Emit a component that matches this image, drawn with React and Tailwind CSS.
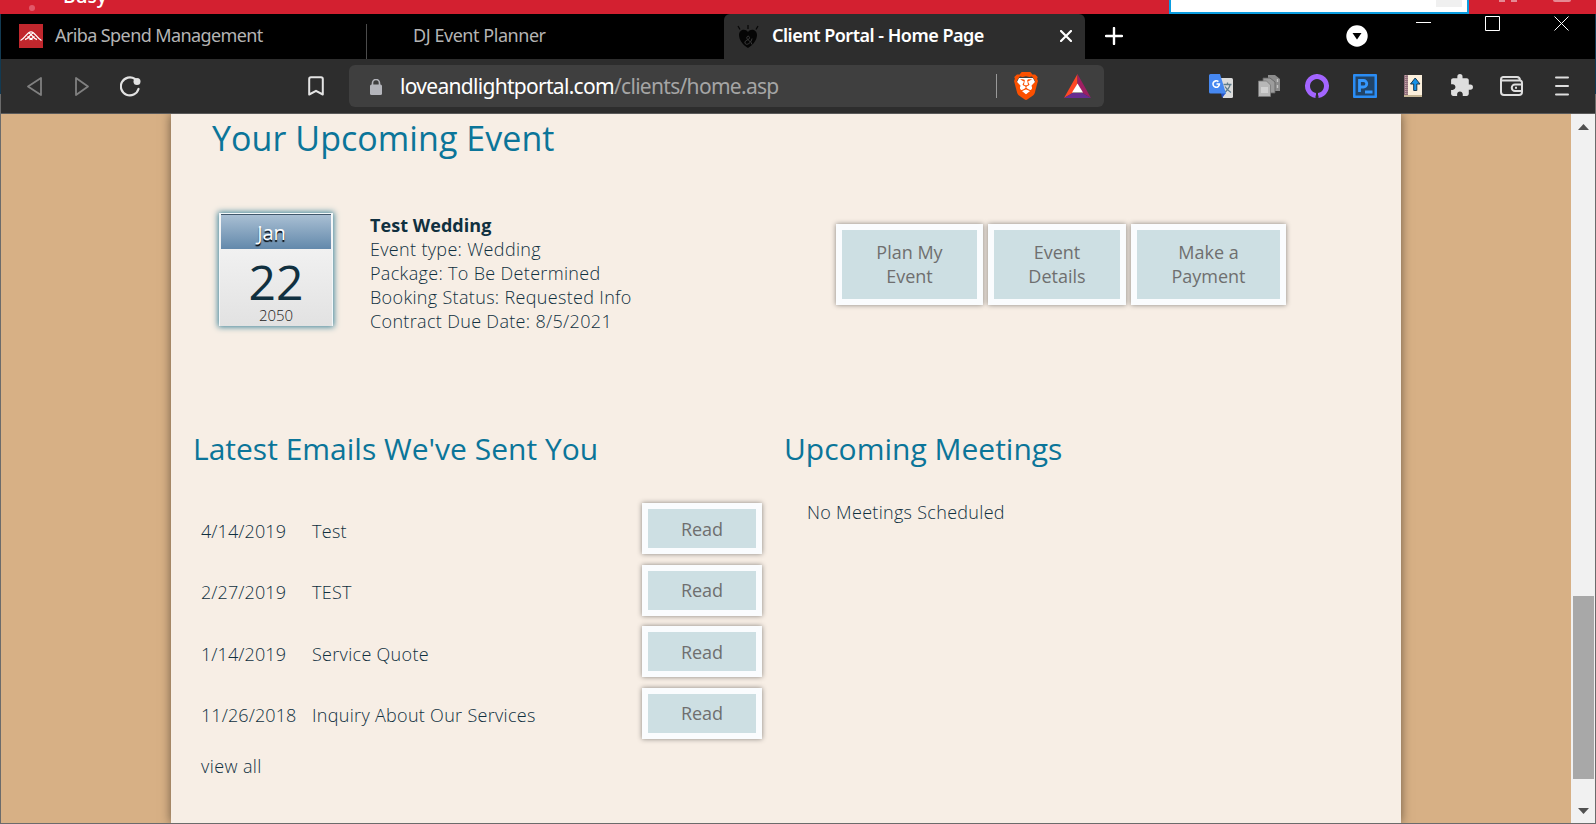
import { SiBrave } from "react-icons/si";
import { MdExtension } from "react-icons/md";

const emails = [
  { date: "4/14/2019", subject: "Test", gap: "mt-0", text: "pt-[5px]", label: "pb-0" },
  { date: "2/27/2019", subject: "TEST", gap: "mt-[11px]", text: "pt-[3px]", label: "pb-[2px]" },
  { date: "1/14/2019", subject: "Service Quote", gap: "mt-[10px]", text: "pt-[5px]", label: "pb-0" },
  { date: "11/26/2018", subject: "Inquiry About Our Services", gap: "mt-[11px]", text: "pt-[3px]", label: "pb-[2px]" },
];

const frame =
  "box-border flex shrink-0 items-center justify-center border-[6px] border-[#fafcfe] bg-[#cddfe3] text-center text-[18px] leading-[24px] text-[#6f6f6f] shadow-[0_0_5px_rgba(0,0,0,0.45)]";

function TopStrip() {
  return (
    <div className="flex h-[14px] shrink-0 overflow-hidden bg-[#d32030]">
      <div className="ml-[29px] mt-[5px] h-[6px] w-[6px] rounded-full bg-[#e2596a]" />
      <span className="-mt-[16px] ml-[28px] h-[24px] w-[60px] text-[19px] font-semibold leading-[24px] text-white">
        Busy
      </span>
      <div className="ml-[1046px] flex h-[14px] w-[300px] justify-end border-x-2 border-b-2 border-[#0a9de0] bg-white pr-[5px]">
        <div className="h-[7px] w-[26px] bg-[#f0f0f0]" />
      </div>
      <div className="ml-[30px] h-[2px] w-[6px] bg-[#e58a94]" />
      <div className="ml-[6px] h-[2px] w-[6px] bg-[#e58a94]" />
      <div className="ml-[36px] h-[2px] w-[18px] rounded-b bg-[#e58a94]" />
    </div>
  );
}

function AribaIcon() {
  return (
    <svg className="ml-[18px] h-6 w-6 shrink-0" viewBox="0 0 24 24">
      <rect width="24" height="24" fill="#c1272d" />
      <g fill="none" stroke="#fff" strokeWidth="1.3">
        <path d="M1.500 16.500C6 14.500 8 7.800 12 7.800s6 6.700 10.500 8.700" />
        <path d="M6 15.500c4-.5 4.500-5 8-6.500M18 15.500c-4-.5-4.500-5-8-6.500M8.500 12.500c2 1 3 3 5 3M15.500 12.500c-2 1-3 3-5 3" />
      </g>
    </svg>
  );
}

function HeartIcon() {
  return (
    <svg className="ml-[13px] h-6 w-[22px] shrink-0" viewBox="0 0 22 24">
      <path d="M11 24C6 21 2 16 2 11c0-5 6-7 9-3 3-4 9-2 9 3 0 5-4 10-9 13Z" fill="#050505" />
      <path d="M11 1v4M1 2l2 3.500M21 2l-2 3.500" stroke="#080808" strokeWidth="1.300" />
      <path
        d="M15 14.500c-1 5-6 7.500-7 4.500s5-3 4.500-5.500-3.500-1-2.500 1 4.500 3 5 6"
        fill="none"
        stroke="#3c3c3c"
        strokeWidth="1"
      />
    </svg>
  );
}

function TabBar() {
  return (
    <div className="flex h-[45px] shrink-0 bg-black font-['Noto_Sans',sans-serif] text-[18px] text-[#b4b4b4]">
      <div className="flex h-[44px] w-[365px] items-center">
        <AribaIcon />
        <span className="-mt-px ml-[12px] whitespace-nowrap tracking-[-0.6px]">Ariba Spend Management</span>
      </div>
      <div className="mt-[10px] h-[35px] w-px bg-[#4b4b4b]" />
      <div className="flex h-[44px] w-[357px] items-center">
        <span className="-mt-px ml-[46px] whitespace-nowrap tracking-[-0.45px]">DJ Event Planner</span>
      </div>
      <div className="flex h-[45px] w-[361px] items-center rounded-t-[6px] bg-[#2d2d2d] pb-px text-white">
        <HeartIcon />
        <span className="-mt-px ml-[13px] whitespace-nowrap font-semibold tracking-[-0.5px]">
          Client Portal - Home Page
        </span>
        <svg className="ml-auto mr-[13px] h-[12px] w-[12px]" viewBox="0 0 12 12">
          <path d="M1 1l10 10M11 1L1 11" stroke="#fff" strokeWidth="2.200" strokeLinecap="round" />
        </svg>
      </div>
      <svg className="ml-[20px] mt-[13px] h-[18px] w-[18px]" viewBox="0 0 18 18">
        <path d="M9 1v16M1 9h16" stroke="#fff" strokeWidth="2.400" strokeLinecap="round" />
      </svg>
      <svg className="ml-[223px] mt-[11px] h-[22px] w-[22px]" viewBox="0 0 22 22">
        <circle cx="11" cy="11" r="10.700" fill="#fff" />
        <path d="M6.500 8h9L11 14.500Z" fill="#000" />
      </svg>
      <svg className="ml-[48px] mt-[2px] h-[16px] w-[153px]" viewBox="0 0 153 16">
        <g fill="none" stroke="#fff">
          <path d="M0 6.500h15M69.500 .5h14v14h-14ZM138.500 .5l14 14M152.500 .5l-14 14" />
        </g>
      </svg>
    </div>
  );
}

function Extensions() {
  return (
    <div className="ml-auto mr-[25px] flex h-full items-center pb-px">
      <svg className="h-6 w-6" viewBox="0 0 24 24">
        <path d="M10 4h12.500a1.500 1.500 0 0 1 1.500 1.500v17a1.500 1.500 0 0 1-1.500 1.500H14Z" fill="#dcdcdc" />
        <path d="M14.500 10.500h8M18.500 8.500v2M21 11c-1 4-3.500 6-6 8M16 12.500c1.500 3 3.500 4.500 6 6" stroke="#607d8b" strokeWidth="1.300" fill="none" />
        <path d="M12 19h5l-4 5Z" fill="#2552c4" />
        <path d="M1.500 0H11l6 19.500H1.500A1.500 1.500 0 0 1 0 18V1.500A1.500 1.500 0 0 1 1.500 0Z" fill="#4688f1" />
        <path d="M9.400 7.700a3.200 3.200 0 1 0 1 2.300H7.500" fill="none" stroke="#fff" strokeWidth="1.600" />
      </svg>
      <svg className="ml-[25px] h-[22px] w-[22px]" viewBox="0 0 22 22">
        <path d="M10 0h7l5 4v12H10Z" fill="#8c8c8c" />
        <path d="M5 3h7l5 4v11H5Z" fill="#9c9c9c" stroke="#606060" strokeWidth=".8" />
        <path d="M.5 6h8l4 4v11.500H.5Z" fill="#b7b7b7" stroke="#777" strokeWidth=".8" />
        <path d="M3 12h7v6H3Z" fill="#d0d0d0" />
        <path d="M19.500 4v3M19.500 10v3" stroke="#c4c4c4" strokeWidth="1.400" />
      </svg>
      <svg className="ml-[25px] h-6 w-6" viewBox="0 0 24 24">
        <path d="M10.500 21.500v2.400A12 12 0 1 1 13.500 23.900v-2.400Z" fill="#a365ff" />
        <path d="M11 24v-5A7 7 0 1 1 13 19v5Z" fill="#2d2d2d" />
      </svg>
      <svg className="ml-6 h-6 w-6" viewBox="0 0 24 24">
        <rect width="24" height="24" rx="1" fill="#2a8cf4" />
        <rect x="2.500" y="2.500" width="19" height="19" fill="#214468" />
        <path d="M6.500 18V6.500h4a2.800 2.800 0 0 1 0 6.500H7M12 18h7.500" fill="none" stroke="#3598ff" strokeWidth="2.800" />
      </svg>
      <svg className="ml-[27px] h-[22px] w-[18px]" viewBox="0 0 18 22">
        <rect width="18" height="22" fill="#fbefdc" />
        <path d="M0 0h4v20H0Z" fill="#8d6b78" />
        <path d="M1.500 0v20M3 0v20" stroke="#d2b4b4" strokeWidth=".8" strokeDasharray="1 1" />
        <path d="M0 20h18v2H0Z" fill="#c5b595" />
        <path d="M9.700 15.500V9H6.500l4.700-6 4.800 6h-3.200v6.500Z" fill="#1391e8" stroke="#17364d" strokeWidth="1" />
      </svg>
      <MdExtension className="ml-[27px] h-[25px] w-[25px] text-[#dedede]" />
      <svg className="ml-[26px] h-[20px] w-[23px]" viewBox="0 0 23 20" fill="none" stroke="#dedede" strokeWidth="2">
        <path d="M20 4.500H3Q1 4.500 1 3T3 1h14q3 0 3 3.500Q22 4.500 22 7v9q0 3-3 3H4q-3 0-3-3V3" />
        <path d="M22 8.500h-7a3.200 3.200 0 0 0 0 6.500h7M15 11.800h2" />
      </svg>
      <svg className="ml-[32px] mr-px h-5 w-[14px]" viewBox="0 0 14 20">
        <path d="M1 1.500h12M1 10h12M1 18.500h12" stroke="#dedede" strokeWidth="2" strokeLinecap="round" />
      </svg>
    </div>
  );
}

function Toolbar() {
  return (
    <div className="box-border flex h-[55px] shrink-0 items-center border-b border-[#5a5a5a] bg-[#2d2d2d]">
      <svg className="ml-[25px] h-[21px] w-[17px]" viewBox="0 0 17 21">
        <path d="M15 2v17L2 10.500Z" fill="none" stroke="#808080" strokeWidth="1.800" strokeLinejoin="round" />
      </svg>
      <svg className="ml-[31px] h-[21px] w-[17px]" viewBox="0 0 17 21">
        <path d="M2 2v17l12-8.500Z" fill="none" stroke="#808080" strokeWidth="1.800" strokeLinejoin="round" />
      </svg>
      <svg className="ml-[29px] h-[21px] w-[21px]" viewBox="0 0 21 21">
        <path d="M18.500 13A9 9 0 1 1 15 3" fill="none" stroke="#e2e2e2" strokeWidth="2.200" strokeLinecap="round" />
        <circle cx="17" cy="5.500" r="3.500" fill="#e2e2e2" />
      </svg>
      <svg className="ml-[167px] h-[20px] w-[16px]" viewBox="0 0 16 20">
        <path d="M1.200 18.500V3Q1.200 1.200 3 1.200h10q1.800 0 1.800 1.800v15.500L8 14.800Z" fill="none" stroke="#e4e4e4" strokeWidth="2" strokeLinejoin="round" />
      </svg>
      <div className="ml-[25px] flex h-[42px] w-[755px] items-center rounded-[6px] bg-[#3f3f3f]">
        <svg className="ml-[21px] mt-[2px] h-[16px] w-[12px]" viewBox="0 0 12 16">
          <path d="M2.500 7V4a3.500 3.500 0 0 1 7 0v3" fill="none" stroke="#b4b5bb" strokeWidth="1.600" />
          <rect y="5.500" width="12" height="10.500" rx="1.500" fill="#b4b5bb" />
        </svg>
        <span className="ml-[18px] whitespace-nowrap font-['Noto_Sans',sans-serif] text-[21px] leading-[30px] tracking-[-0.7px] text-[#a5a5a5]">
          <span className="text-white">loveandlightportal.com</span>/clients/home.asp
        </span>
        <div className="ml-auto h-6 w-px bg-[#999]" />
        <div className="relative ml-[17px] h-[28px] w-[24px]">
          <svg className="absolute left-0 top-0 h-[28px] w-[24px]" viewBox="0 0 24 28">
            <path d="M5 6h14l2 4-3 10-6 4-6-4L3 10Z" fill="#fff" />
          </svg>
          <SiBrave className="absolute -left-[2px] top-0 h-[28px] w-[28px] text-[#fb5000]" />
        </div>
        <svg className="ml-[26px] mr-[13px] h-[24px] w-[27px]" viewBox="0 0 27 24">
          <path d="M13.500 0L0 24l8.500-5 5-9Z" fill="#ff4724" />
          <path d="M13.500 0L27 24l-8.500-5-5-9Z" fill="#9e1f63" />
          <path d="M0 24h27l-8.500-5h-10Z" fill="#662d91" />
          <path d="M13.500 9.500l5.500 9H8Z" fill="#fff" />
        </svg>
      </div>
      <Extensions />
    </div>
  );
}

function CalendarCard() {
  return (
    <div className="mt-[2px] flex h-[113px] w-[114px] shrink-0 flex-col border-x border-t border-[#f3f8fa] bg-linear-to-b from-[#f8f8f8] to-[#e2e2e2] text-center shadow-[0_0_6px_1px_#3c8298]">
      <div className="mx-px h-[35px] border-t border-[#40566a] bg-linear-to-b from-[#a9bfd3] to-[#6389ab] pr-[9px] text-[20px] leading-[36px] text-white [text-shadow:0_2px_1px_#000]">
        Jan
      </div>
      <div className="h-[60px] pt-[6px] text-[48px] leading-[54px] text-[#10303f]">22</div>
      <div className="text-[15px] font-light leading-[12px] text-[#222]">2050</div>
    </div>
  );
}

function Page() {
  return (
    <main className="box-border flex h-full w-[1230px] flex-col bg-[#f7eee5] font-['Open_Sans',sans-serif] text-[18px] leading-[24px] text-[#10303f] shadow-[0_0_10px_rgba(0,0,0,0.5)]">
      <h1 className="ml-[41px] h-[48px] text-[34px] leading-[48px] tracking-[0.05px] text-[#0b7599]">
        Your Upcoming Event
      </h1>
      <section className="ml-[48px] mt-[49px] flex h-[124px]">
        <CalendarCard />
        <div className="ml-[37px] mt-[2px] w-[466px] font-light tracking-[0.33px]">
          <div className="font-bold tracking-[0.05px]">Test Wedding</div>
          <div>Event type: Wedding</div>
          <div>Package: To Be Determined</div>
          <div>Booking Status: Requested Info</div>
          <div>Contract Due Date: 8/5/2021</div>
        </div>
        <div className="mt-[13px] flex gap-[5px]">
          <div className={`${frame} h-[81px] w-[147px] pb-[2px]`}>Plan My<br />Event</div>
          <div className={`${frame} h-[81px] w-[138px] pb-[2px]`}>Event<br />Details</div>
          <div className={`${frame} h-[81px] w-[155px] pb-[2px]`}>Make a<br />Payment</div>
        </div>
      </section>
      <div className="mt-[92px] flex">
        <section className="ml-[22px] w-[591px]">
          <h2 className="h-[44px] text-[30px] leading-[44px] text-[#0b7599]">Latest Emails We've Sent You</h2>
          <div className="ml-[8px] mt-[32px]">
            {emails.map((mail) => (
              <div key={mail.date} className={`flex ${mail.gap} h-[51px] items-center`}>
                <span className={`w-[111px] ${mail.text} font-light tracking-[0.1px]`}>{mail.date}</span>
                <span className={`w-[330px] ${mail.text} font-light tracking-[0.3px]`}>{mail.subject}</span>
                <div className={`${frame} ${mail.label} h-[51px] w-[120px]`}>Read</div>
              </div>
            ))}
            <div className="mt-[15px] font-light tracking-[0.4px]">view all</div>
          </div>
        </section>
        <section>
          <h2 className="h-[44px] text-[30px] leading-[44px] text-[#0b7599]">Upcoming Meetings</h2>
          <p className="ml-[23px] mt-[29px] font-light tracking-[0.3px]">No Meetings Scheduled</p>
        </section>
      </div>
    </main>
  );
}

function Scrollbar() {
  return (
    <div className="flex w-[24px] shrink-0 flex-col items-center bg-[#f1f1f1]">
      <svg className="mt-[10px] h-[6px] w-[11px]" viewBox="0 0 11 6">
        <path d="M0 6L5.500 0 11 6Z" fill="#505050" />
      </svg>
      <div className="mt-[466px] h-[183px] w-[21px] bg-[#a8a8a8]" />
      <svg className="mt-[29px] h-[6px] w-[11px]" viewBox="0 0 11 6">
        <path d="M0 0h11L5.500 6Z" fill="#505050" />
      </svg>
    </div>
  );
}

export default function App() {
  return (
    <div className="flex h-[824px] w-[1596px] flex-col overflow-hidden font-['Open_Sans',sans-serif]">
      <TopStrip />
      <div className="flex min-h-0 flex-1">
        <div className="flex w-px flex-col">
          <div className="h-[80px] bg-[#123a52]" />
          <div className="flex-1 bg-[#6b6b6b]" />
        </div>
        <div className="flex w-[1594px] flex-col">
          <TabBar />
          <Toolbar />
          <div className="flex min-h-0 flex-1 overflow-hidden border-b border-[#6b6b6b] bg-[#d7b085]">
            <div className="flex w-[1570px] pl-[170px]">
              <Page />
            </div>
            <Scrollbar />
          </div>
        </div>
        <div className="flex w-px flex-col">
          <div className="h-[80px] bg-[#123a52]" />
          <div className="flex-1 bg-[#6b6b6b]" />
        </div>
      </div>
    </div>
  );
}
